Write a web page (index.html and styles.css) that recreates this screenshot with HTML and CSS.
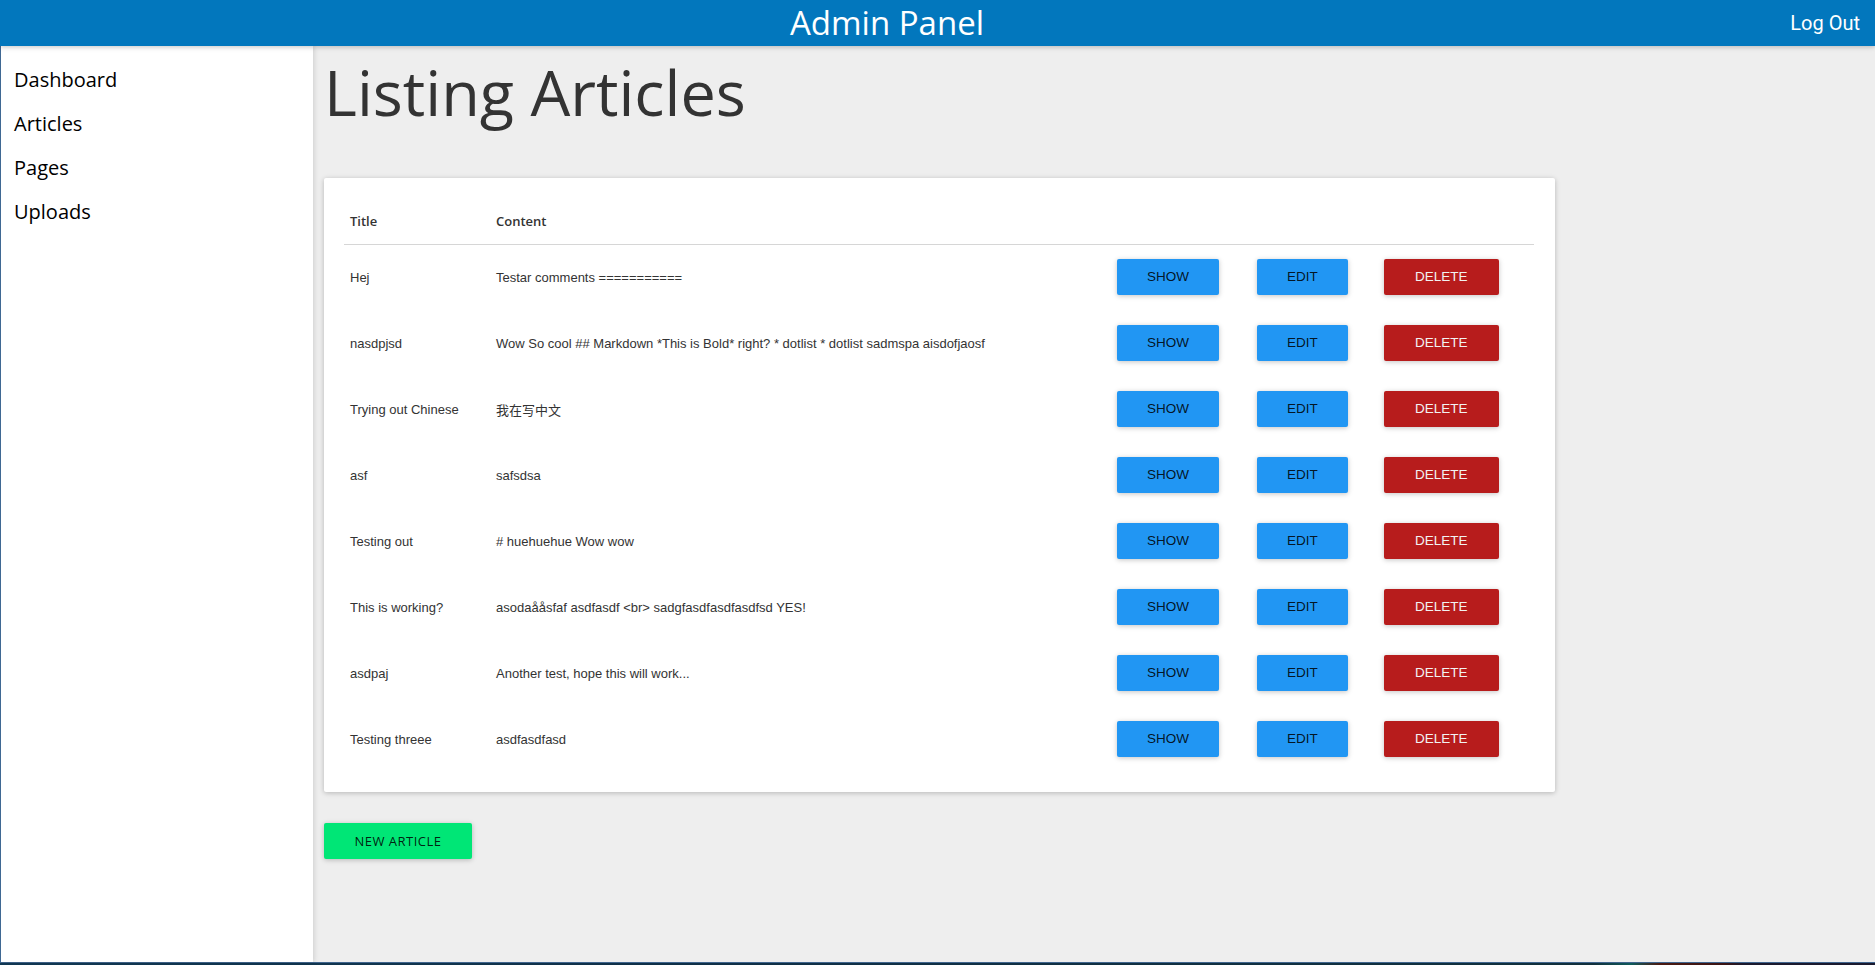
FILE: index.html
```html
<!DOCTYPE html>
<html lang="en">
<head>
<meta charset="utf-8">
<title>Admin Panel</title>
<link rel="stylesheet" href="styles.css">
</head>
<body>
<div class="app">
  <header class="topbar">
    <div class="topbar-title">Admin Panel</div>
    <a class="logout" href="#">Log Out</a>
  </header>
  <div class="layout">
    <nav class="sidebar">
      <a class="nav-item" href="#">Dashboard</a>
      <a class="nav-item" href="#">Articles</a>
      <a class="nav-item" href="#">Pages</a>
      <a class="nav-item" href="#">Uploads</a>
    </nav>
    <main class="main">
      <h1 class="page-title">Listing Articles</h1>
      <div class="card">
        <table class="articles">
          <colgroup>
            <col class="c-title">
            <col class="c-content">
            <col class="c-show">
            <col class="c-edit">
            <col class="c-delete">
          </colgroup>
          <thead>
            <tr><th>Title</th><th>Content</th><th></th><th></th><th></th></tr>
          </thead>
          <tbody>
            <tr><td>Hej</td><td>Testar comments ===========</td><td><button class="btn btn-blue">Show</button></td><td><button class="btn btn-blue">Edit</button></td><td><button class="btn btn-red">Delete</button></td></tr>
            <tr><td>nasdpjsd</td><td>Wow So cool ## Markdown *This is Bold* right? * dotlist * dotlist sadmspa aisdofjaosf</td><td><button class="btn btn-blue">Show</button></td><td><button class="btn btn-blue">Edit</button></td><td><button class="btn btn-red">Delete</button></td></tr>
            <tr><td>Trying out Chinese</td><td>我在写中文</td><td><button class="btn btn-blue">Show</button></td><td><button class="btn btn-blue">Edit</button></td><td><button class="btn btn-red">Delete</button></td></tr>
            <tr><td>asf</td><td>safsdsa</td><td><button class="btn btn-blue">Show</button></td><td><button class="btn btn-blue">Edit</button></td><td><button class="btn btn-red">Delete</button></td></tr>
            <tr><td>Testing out</td><td># huehuehue Wow wow</td><td><button class="btn btn-blue">Show</button></td><td><button class="btn btn-blue">Edit</button></td><td><button class="btn btn-red">Delete</button></td></tr>
            <tr><td>This is working?</td><td>asodaååsfaf asdfasdf &lt;br&gt; sadgfasdfasdfasdfsd YES!</td><td><button class="btn btn-blue">Show</button></td><td><button class="btn btn-blue">Edit</button></td><td><button class="btn btn-red">Delete</button></td></tr>
            <tr><td>asdpaj</td><td>Another test, hope this will work...</td><td><button class="btn btn-blue">Show</button></td><td><button class="btn btn-blue">Edit</button></td><td><button class="btn btn-red">Delete</button></td></tr>
            <tr><td>Testing threee</td><td>asdfasdfasd</td><td><button class="btn btn-blue">Show</button></td><td><button class="btn btn-blue">Edit</button></td><td><button class="btn btn-red">Delete</button></td></tr>
          </tbody>
        </table>
      </div>
      <button class="btn-new">New Article</button>
    </main>
  </div>
  <div class="taskbar"></div>
</div>
</body>
</html>
```

FILE: styles.css
```css
* { box-sizing: border-box; }

html, body {
  margin: 0;
  padding: 0;
  height: 100%;
}

body {
  font-family: "Open Sans", "Noto Sans", sans-serif;
  background: #eeeeee;
  color: rgba(0, 0, 0, 0.87);
  overflow: hidden;
}

.app {
  height: 100vh;
  display: flex;
  flex-direction: column;
}

.topbar {
  flex: none;
  height: 46px;
  display: flex;
  align-items: stretch;
  background: #0277bd;
  color: #fff;
  position: relative;
  z-index: 2;
  box-shadow: 0 1px 6px rgba(0, 0, 0, 0.12), 0 1px 4px rgba(0, 0, 0, 0.12);
}

.topbar-title {
  flex: 1;
  text-align: center;
  font-family: "Open Sans", sans-serif;
  font-size: 33px;
  line-height: 46px;
}

.logout {
  flex: none;
  font-family: Roboto, "Liberation Sans", sans-serif;
  font-size: 20px;
  line-height: 46px;
  color: #fff;
  text-decoration: none;
  white-space: nowrap;
  padding: 0 15px;
  width: 101px;
  text-align: right;
}

.layout {
  flex: 1;
  display: flex;
  min-height: 0;
}

.sidebar {
  flex: none;
  width: 313px;
  background: #fff;
  border-left: 1px solid #3f6893;
  padding: 12px 0 0 13px;
  position: relative;
  z-index: 1;
  box-shadow: 1px 0 5px rgba(0, 0, 0, 0.14);
}

.nav-item {
  display: block;
  font-family: "Open Sans", sans-serif;
  font-size: 20px;
  line-height: 44px;
  height: 44px;
  color: #000;
  text-decoration: none;
}

.main {
  flex: 1;
  padding: 3px 11px 0 11px;
  background: #eeeeee;
}

.page-title {
  margin: 0 0 44px 0;
  font-family: "Open Sans", sans-serif;
  font-weight: 400;
  font-size: 63px;
  line-height: normal;
  color: #333;
}

.card {
  width: 1231px;
  background: #fff;
  border-radius: 2px;
  padding: 20px 21px 20px 20px;
  box-shadow: 0 1px 6px rgba(0, 0, 0, 0.12), 0 1px 4px rgba(0, 0, 0, 0.12);
}

.articles {
  width: 1190px;
  table-layout: fixed;
  border-collapse: collapse;
}

.c-title { width: 146px; }
.c-content { width: 621px; }
.c-show { width: 140px; }
.c-edit { width: 127px; }
.c-delete { width: 156px; }

.articles th {
  height: 46px;
  padding: 0 6px;
  text-align: left;
  font-family: "Open Sans", sans-serif;
  font-weight: 600;
  font-size: 13px;
  color: #333;
  border-bottom: 1px solid #d6d6d6;
  vertical-align: middle;
}

.articles td {
  height: 66px;
  padding: 0 6px;
  font-family: "Liberation Sans", Arial, "Noto Sans CJK SC", sans-serif;
  font-size: 13px;
  color: #333;
  vertical-align: middle;
  white-space: nowrap;
}

.btn {
  display: inline-block;
  height: 36px;
  padding: 0 30px;
  border: none;
  border-radius: 2px;
  font-family: "Liberation Sans", Arial, sans-serif;
  font-size: 13.5px;
  font-weight: 400;
  text-transform: uppercase;
  line-height: 36px;
  cursor: pointer;
  box-shadow: 0 1px 6px rgba(0, 0, 0, 0.12), 0 1px 4px rgba(0, 0, 0, 0.12);
}

.btn-blue {
  background: #2196f3;
  color: rgba(0, 0, 0, 0.87);
}

.btn-red {
  background: #b71c1c;
  color: #f2f2f2;
  padding: 0 31px;
}

.btn-new {
  display: block;
  margin-top: 31px;
  width: 148px;
  height: 36px;
  border: none;
  border-radius: 2px;
  background: #00e676;
  color: rgba(0, 0, 0, 0.87);
  font-family: "Open Sans", sans-serif;
  font-size: 13px;
  letter-spacing: 0.5px;
  text-transform: uppercase;
  cursor: pointer;
  box-shadow: 0 1px 6px rgba(0, 0, 0, 0.12), 0 1px 4px rgba(0, 0, 0, 0.12);
}

.taskbar {
  flex: none;
  height: 3px;
  border-top: 1px solid #41668f;
  background: linear-gradient(90deg, #123a55 0%, #0f3048 35%, #12303c 85%, #0f5a5a 87%, #4a1a12 88.5%, #3a1414 92%, #1a1a2e 93%, #1a1a2e 100%);
}
```
